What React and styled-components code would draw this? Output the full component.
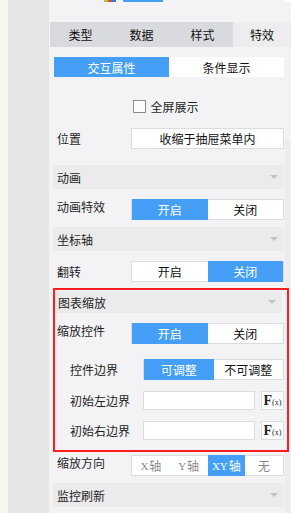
import React from "react";
import styled, { createGlobalStyle } from "styled-components";

const GlobalStyle = createGlobalStyle`
  html, body { margin: 0; padding: 0; }
  body {
    font-family: "Noto Sans CJK SC", "Noto Sans", sans-serif;
    font-size: 12px;
    color: #1e1e1e;
    background: #f3f3f5;
  }
`;

const BLUE = "#459ff7";

export default function App() {
  return (
    <Page>
      <GlobalStyle />
      <EdgeStrip />
      <Rail />
      <Panel>
        <TopStrip>
          <Logo>
            <i style={{ background: "#9ccc3c" }} />
            <i style={{ background: "#e0463c" }} />
            <i style={{ background: "#2f7fd0" }} />
          </Logo>
          <TopBar />
          <TopCorner />
        </TopStrip>

        <Tabs>
          <Tab>类型</Tab>
          <Tab>数据</Tab>
          <Tab>样式</Tab>
          <Tab $active>特效</Tab>
        </Tabs>

        <Body>
          <Content>
            <SubTabs>
              <SubTab $active>交互属性</SubTab>
              <SubTab>条件显示</SubTab>
            </SubTabs>

            <CheckRow>
              <CheckBox />
              <span>全屏展示</span>
            </CheckRow>

            <Row $mt={15}>
              <Label>位置</Label>
              <TextBox $center>收缩于抽屉菜单内</TextBox>
            </Row>

            <Header $mt={16}>
              <span>动画</span>
              <Arrow />
            </Header>

            <Row $mt={10} $top>
              <Label>动画特效</Label>
              <Segments>
                <Seg $active>开启</Seg>
                <Seg>关闭</Seg>
              </Segments>
            </Row>

            <Header $mt={7}>
              <span>坐标轴</span>
              <Arrow />
            </Header>

            <Row $mt={10}>
              <Label>翻转</Label>
              <Segments>
                <Seg>开启</Seg>
                <Seg $active>关闭</Seg>
              </Segments>
            </Row>

            <Highlight>
              <Header $mt={0} $pl={3} $h={22} $mr={2}>
                <span>图表缩放</span>
                <Arrow />
              </Header>

              <Row $mt={10} $pl={2} $top>
                <Label>缩放控件</Label>
                <Segments>
                  <Seg $active>开启</Seg>
                  <Seg>关闭</Seg>
                </Segments>
              </Row>

              <Row $mt={15} $pl={15}>
                <Label $w={73}>控件边界</Label>
                <Segments>
                  <Seg $active>可调整</Seg>
                  <Seg>不可调整</Seg>
                </Segments>
              </Row>

              <Row $mt={11} $pl={15} $h={19}>
                <Label $w={73}>初始左边界</Label>
                <TextBox />
                <FxButton>
                  F<small>(x)</small>
                </FxButton>
              </Row>

              <Row $mt={11} $pl={15} $h={19}>
                <Label $w={73}>初始右边界</Label>
                <TextBox />
                <FxButton>
                  F<small>(x)</small>
                </FxButton>
              </Row>
            </Highlight>

            <Row $mt={3} $top>
              <Label>缩放方向</Label>
              <Segments>
                <Seg $dim>
                  <Latin>X</Latin>轴
                </Seg>
                <Seg $dim>
                  <Latin>Y</Latin>轴
                </Seg>
                <Seg $active>
                  <Latin>XY</Latin>轴
                </Seg>
                <Seg $dim>无</Seg>
              </Segments>
            </Row>

            <Header $mt={7}>
              <span>监控刷新</span>
              <Arrow />
            </Header>
          </Content>
          <ScrollTrack>
            <ScrollThumb />
          </ScrollTrack>
        </Body>
      </Panel>
    </Page>
  );
}

const Page = styled.div`
  display: flex;
  width: 291px;
  height: 513px;
  overflow: hidden;
  background: #f3f3f5;
`;

const EdgeStrip = styled.div`
  width: 8px;
  flex: none;
  background: #f7f6f0;
`;

const Rail = styled.div`
  width: 41px;
  flex: none;
  background: #e6e6e6;
`;

const Panel = styled.div`
  flex: 1;
  display: flex;
  flex-direction: column;
  min-width: 0;
  background: #f3f3f5;
`;

const TopStrip = styled.div`
  height: 22px;
  display: flex;
  align-items: flex-start;
`;

const Logo = styled.div`
  display: flex;
  margin-left: 55px;
  i {
    width: 4px;
    height: 2px;
  }
`;

const TopBar = styled.div`
  width: 40px;
  height: 2px;
  margin-left: 7px;
  background: ${BLUE};
`;

const TopCorner = styled.div`
  width: 6px;
  height: 2px;
  margin-left: auto;
  background: #ffffff;
`;

const Tabs = styled.div`
  display: flex;
  height: 25px;
  margin-left: 1px;
  background: #d9dadd;
`;

const Tab = styled.div`
  width: ${(p) => (p.$active ? "58px" : "61px")};
  flex: none;
  display: flex;
  align-items: center;
  justify-content: center;
  font-size: 12px;
  color: #111;
  background: ${(p) => (p.$active ? "#ededef" : "transparent")};
`;

const Body = styled.div`
  flex: 1;
  display: flex;
  min-height: 0;
`;

const Content = styled.div`
  flex: 1;
  display: flex;
  flex-direction: column;
  padding-left: 4px;
  min-width: 0;
`;

const ScrollTrack = styled.div`
  width: 7px;
  flex: none;
  display: flex;
  flex-direction: column;
  padding-top: 93px;
`;

const ScrollThumb = styled.div`
  flex: 1;
  margin-left: 1px;
  width: 5px;
  background: #ececee;
`;

const SubTabs = styled.div`
  display: flex;
  height: 20px;
  margin: 10px 0 0 1px;
`;

const SubTab = styled.div`
  flex: 1;
  display: flex;
  align-items: center;
  justify-content: center;
  color: ${(p) => (p.$active ? "#ffffff" : "#111")};
  background: ${(p) => (p.$active ? BLUE : "#ffffff")};
`;

const CheckRow = styled.div`
  display: flex;
  align-items: center;
  justify-content: center;
  gap: 4px;
  height: 13px;
  margin-top: 23px;
  padding-right: 5px;
`;

const CheckBox = styled.span`
  width: 11px;
  height: 11px;
  border: 1px solid #8c8c8c;
  background: #fbfbfb;
`;

const Row = styled.div`
  display: flex;
  align-items: ${(p) => (p.$top ? "flex-start" : "center")};
  height: ${(p) => p.$h || 21}px;
  margin-top: ${(p) => p.$mt || 0}px;
  padding-left: ${(p) => (p.$pl == null ? 4 : p.$pl)}px;
`;

const Label = styled.div`
  width: ${(p) => p.$w || 74}px;
  flex: none;
  line-height: 16px;
  color: #1e1e1e;
`;

const TextBox = styled.div`
  flex: 1;
  height: 100%;
  box-sizing: border-box;
  border: 1px solid #dcdcdc;
  background: #ffffff;
  display: flex;
  align-items: center;
  justify-content: center;
  color: #111;
`;

const FxButton = styled.div`
  width: 23px;
  height: 100%;
  flex: none;
  margin-left: 6px;
  box-sizing: border-box;
  border: 1px solid #dcdcdc;
  background: #ffffff;
  display: flex;
  align-items: center;
  justify-content: center;
  font-family: "Liberation Serif", serif;
  font-weight: bold;
  font-size: 14px;
  color: #222;
  small {
    font-size: 8px;
    font-weight: normal;
    margin-top: 3px;
  }
`;

const Segments = styled.div`
  flex: 1;
  height: 100%;
  box-sizing: border-box;
  display: flex;
  border: 1px solid #dcdcdc;
  background: #ffffff;
`;

const Seg = styled.div`
  flex: 1;
  display: flex;
  align-items: center;
  justify-content: center;
  margin: ${(p) => (p.$active ? "-1px 0" : "0")};
  color: ${(p) => (p.$active ? "#ffffff" : p.$dim ? "#8a8a8a" : "#111")};
  background: ${(p) => (p.$active ? BLUE : "#ffffff")};
`;

const Latin = styled.span`
  font-family: "Liberation Serif", serif;
  font-size: 11px;
  margin-right: 1px;
`;

const Header = styled.div`
  display: flex;
  align-items: center;
  justify-content: space-between;
  height: ${(p) => p.$h || 24}px;
  margin-top: ${(p) => p.$mt || 0}px;
  margin-right: ${(p) => p.$mr || 0}px;
  padding: 0 6px 0 ${(p) => p.$pl || 4}px;
  background: #ebebeb;
  color: #1e1e1e;
`;

const Arrow = styled.span`
  width: 0;
  height: 0;
  border-left: 4px solid transparent;
  border-right: 4px solid transparent;
  border-top: 4px solid #c2c2c2;
`;

/* annotation frame sits on top of the scroll track, hence the stacking */
const Highlight = styled.div`
  position: relative;
  z-index: 1;
  display: flex;
  flex-direction: column;
  margin: 6px -5px 0 0;
  padding: 1px 3px 10px 0;
  border: 2px solid #ff1d1d;
`;
